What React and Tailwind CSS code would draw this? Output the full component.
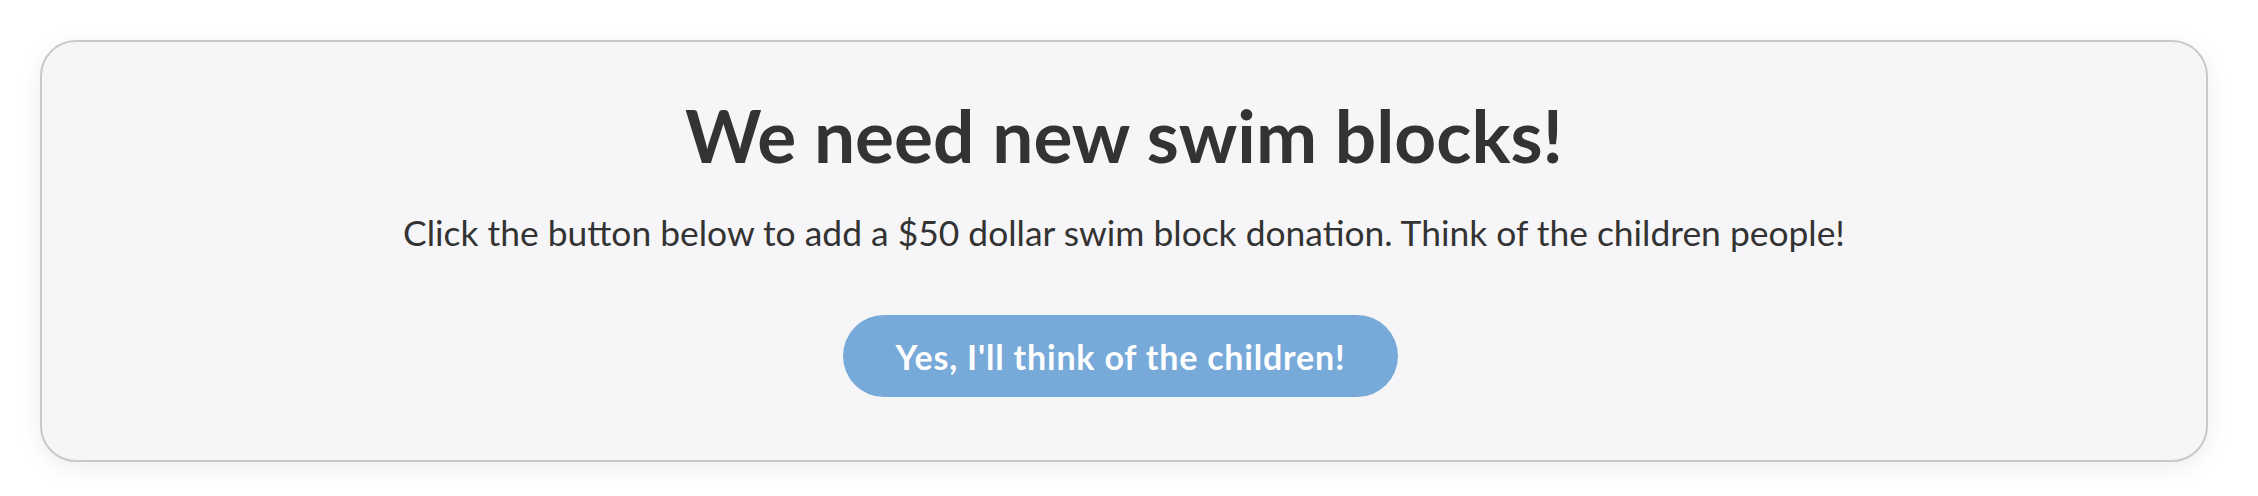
import React from "react";

export default function App() {
  return (
    <div className="min-h-screen bg-white pl-10 pt-10 pb-[35px] font-['Lato',sans-serif] text-[#333333]">
      <div className="flex h-[422px] w-[2168px] flex-col items-center rounded-[36px] border-2 border-[#c9c9c9] bg-[#f6f6f8] pt-[57px] shadow-[0_6px_24px_rgba(0,0,0,0.07)]">
        <h1 className="text-[73px] font-bold leading-[72px]">We need new swim blocks!</h1>
        <p className="mt-[45px] text-[35.4px] leading-[34px]">
          Click the button below to add a $50 dollar swim block donation. Think of the children people!
        </p>
        <button className="mt-[65px] mr-[7px] flex h-[82px] w-[555px] items-center justify-center rounded-full bg-[#77a9d9] text-[34px] font-bold tracking-[0.8px] text-white">
          Yes, I'll think of the children!
        </button>
      </div>
    </div>
  );
}
